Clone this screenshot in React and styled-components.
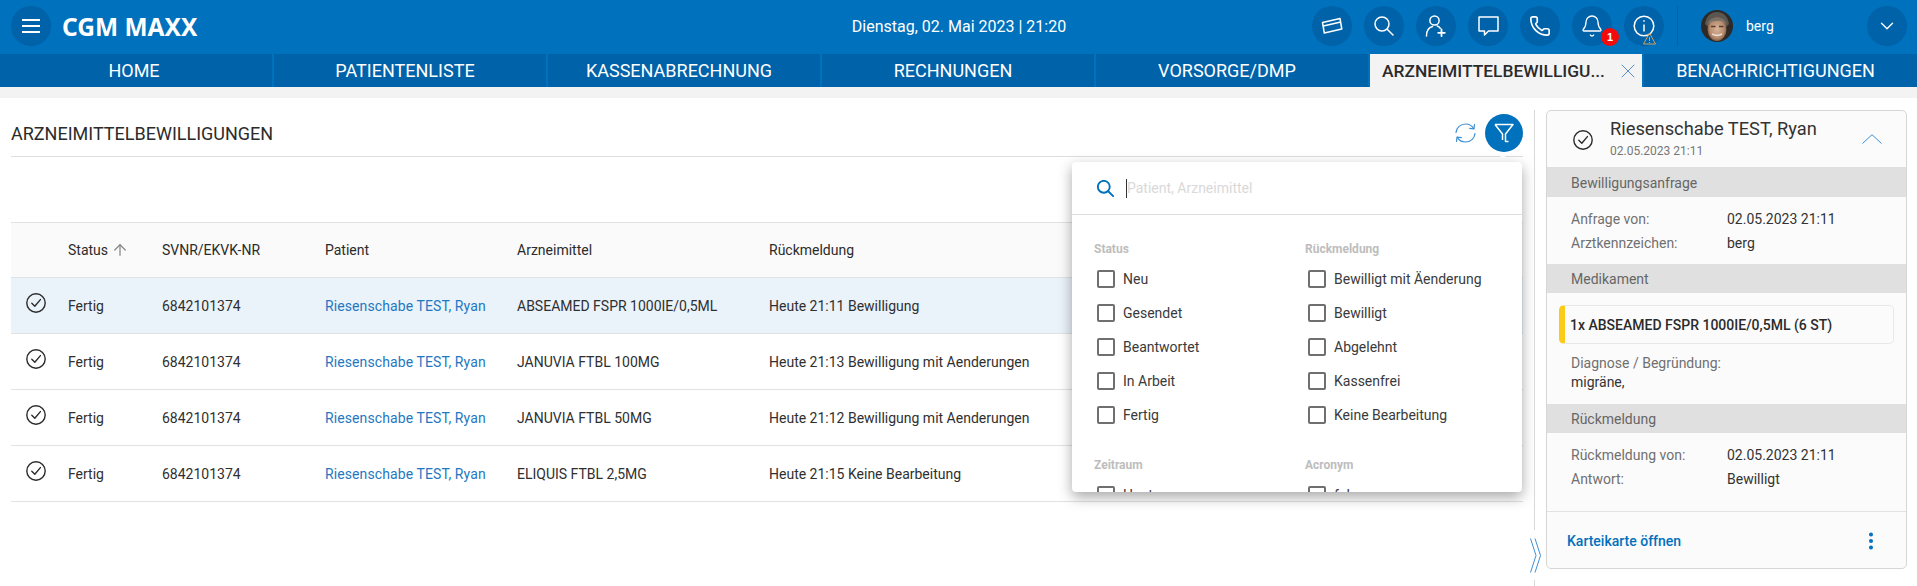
import React from 'react';
import styled, { createGlobalStyle } from 'styled-components';
import { ArrowUp, Bell, ChevronDown, MoreVertical, Phone, X } from 'lucide-react';

const GlobalStyle = createGlobalStyle`
  html, body { margin: 0; padding: 0; background: #fff; }
  body { font-family: Roboto, "Liberation Sans", sans-serif; font-size: 14px; color: #333; }
  * { box-sizing: border-box; }
`;

const Page = styled.div`
  width: 1917px;
  height: 586px;
  overflow: hidden;
  display: flex;
  flex-direction: column;
`;

const TopBar = styled.header`
  height: 54px;
  flex: none;
  background: #0071bc;
  display: grid;
  grid-template-columns: 1fr auto 1fr;
  align-items: center;
  padding: 0 10px 2px 11px;
  color: #fff;
`;

const BarLeft = styled.div`
  display: flex;
  align-items: center;
  gap: 11px;
`;

const BarRight = styled.div`
  display: flex;
  align-items: center;
  justify-content: flex-end;
`;

const RoundButton = styled.button`
  position: relative;
  width: 40px;
  height: 40px;
  flex: none;
  border: none;
  border-radius: 50%;
  padding: 0;
  background: #0062a9;
  color: #fff;
  display: flex;
  align-items: center;
  justify-content: center;
  margin-left: ${p => p.$gap || 0}px;
`;

const Logo = styled.div`
  font-family: "Noto Sans", sans-serif;
  font-weight: 700;
  font-size: 24.5px;
  white-space: nowrap;
`;

const Clock = styled.div`
  font-size: 16px;
  font-weight: 400;
`;

const Badge = styled.span`
  position: absolute;
  left: 29px;
  top: 22px;
  width: 18px;
  height: 18px;
  border-radius: 50%;
  background: #f50a0a;
  color: #fff;
  font-size: 11px;
  font-weight: 700;
  display: flex;
  align-items: center;
  justify-content: center;
`;

const WarnIcon = styled.svg`
  position: absolute;
  left: 19px;
  top: 26px;
`;

const BarDivider = styled.div`
  width: 1px;
  height: 40px;
  background: #0062a9;
  margin: 0 23px 0 13px;
`;

const UserName = styled.span`
  font-size: 14px;
  font-weight: 400;
  margin-left: 13px;
  margin-right: auto;
`;

const UserBox = styled.div`
  width: 206px;
  display: flex;
  align-items: center;
`;

const TabBar = styled.nav`
  height: 33px;
  flex: none;
  display: flex;
  gap: 2px;
  background: #0071bc;
`;

const Tab = styled.div`
  flex: none;
  width: 272px;
  display: flex;
  align-items: center;
  justify-content: center;
  padding-right: 10px;
  background: #0062a9;
  color: #fff;
  font-size: 18px;
  white-space: nowrap;
  &:first-child {
    padding-right: 4px;
  }
  &:last-child {
    flex: 1;
    width: auto;
  }
`;

const ActiveTab = styled(Tab)`
  justify-content: space-between;
  padding: 0 2px 0 12px;
  background: #f3f3f3;
  color: #2b2b2b;
  font-size: 17.4px;
  font-weight: 500;
`;

const TabClose = styled(X)`
  color: #5b8ec9;
  flex: none;
`;

const Strip = styled.div`
  height: 11px;
  flex: none;
  background: #f3f3f3;
`;

const Body = styled.div`
  flex: 1;
  min-height: 0;
  display: flex;
  padding-top: 12px;
`;

const Main = styled.main`
  position: relative;
  width: 1535px;
  flex: none;
  margin-top: -12px;
  padding: 16px 12px 0 11px;
  &::after {
    content: '';
    position: absolute;
    right: 0;
    top: 12px;
    bottom: 0;
    width: 1px;
    background: #d9d9d9;
  }
`;

const TitleRow = styled.div`
  display: flex;
  align-items: center;
  justify-content: space-between;
  padding-bottom: 4px;
  border-bottom: 1px solid #dedede;
`;

const Title = styled.h1`
  margin: 0;
  font-size: 18px;
  font-weight: 400;
  color: #2b2b2b;
`;

const TitleActions = styled.div`
  display: flex;
  align-items: center;
  gap: 9px;
  color: #3f8fd2;
`;

const FilterButton = styled.button`
  width: 38px;
  height: 38px;
  border: none;
  border-radius: 50%;
  padding: 0;
  background: #0071bc;
  display: flex;
  align-items: center;
  justify-content: center;
`;

const Table = styled.div`
  margin-top: 65px;
  border-top: 1px solid #e2e2e2;
`;

const Row = styled.div`
  display: grid;
  grid-template-columns: 57px 94px 163px 192px 252px 1fr;
  align-items: center;
  height: ${p => (p.$head ? 55 : 56)}px;
  border-bottom: 1px solid #e2e2e2;
  background: ${p => (p.$head ? '#fafafa' : p.$selected ? '#eaf2fa' : '#fff')};
  font-size: 14px;
  color: #2f2f2f;
`;

const HeadCell = styled.div`
  display: flex;
  align-items: center;
  gap: 3px;
  color: #2b2b2b;
`;

const SortIcon = styled(ArrowUp)`
  color: #888;
`;

const IconCell = styled.div`
  display: flex;
  justify-content: center;
  width: 49px;
  margin-bottom: 6px;
  color: #2b2b2b;
`;

const PatientLink = styled.a`
  color: #1f78c1;
  letter-spacing: 0.1px;
`;

const Popup = styled.div`
  position: absolute;
  left: 1072px;
  top: 64px;
  width: 450px;
  height: 330px;
  background: #fff;
  border-radius: 4px;
  box-shadow: 0 5px 14px rgba(0, 0, 0, 0.35);
  overflow: hidden;
`;

const PopupArrow = styled.div`
  position: absolute;
  left: 1495px;
  top: 56px;
  width: 0;
  height: 0;
  border-left: 8px solid transparent;
  border-right: 8px solid transparent;
  border-bottom: 8px solid #fff;
`;

const SearchRow = styled.div`
  height: 53px;
  display: flex;
  align-items: center;
  padding: 0 0 0 25px;
  border-bottom: 1px solid #dedede;
  color: #0071bc;
`;

const Caret = styled.span`
  width: 1px;
  height: 19px;
  background: #333;
  margin-left: 12px;
`;

const Placeholder = styled.span`
  font-size: 14px;
  color: #d9d9d9;
`;

const FilterGrid = styled.div`
  display: grid;
  grid-template-columns: 211px 1fr;
  row-gap: 26px;
  padding: 27px 0 0 22px;
`;

const GroupTitle = styled.div`
  font-size: 12px;
  font-weight: 700;
  color: #bdbdbd;
  line-height: 14px;
  margin-bottom: 6px;
`;

const CheckRow = styled.label`
  display: flex;
  align-items: center;
  height: 34px;
  padding-left: 3px;
  font-size: 14px;
  color: #3a3a3a;
  gap: 8px;
`;

const CheckBox = styled.span`
  width: 18px;
  height: 18px;
  flex: none;
  border: 2px solid #6f6f6f;
  border-radius: 2px;
`;

const SplitHandle = styled.div`
  position: absolute;
  right: -6px;
  top: 432px;
  width: 12px;
  height: 50px;
  background: #fff;
  display: flex;
  align-items: center;
  justify-content: center;
  z-index: 1;
`;

const Side = styled.aside`
  flex: 1;
  padding: 0 10px 0 11px;
`;

const Card = styled.section`
  height: 459px;
  background: #fbfbfb;
  border: 1px solid #d6d6d6;
  border-radius: 5px;
  display: flex;
  flex-direction: column;
`;

const CardHead = styled.div`
  height: 56px;
  flex: none;
  display: grid;
  grid-template-columns: 63px 1fr 44px;
  align-items: center;
`;

const CardIcon = styled.div`
  display: flex;
  justify-content: flex-end;
  padding-right: 17px;
  padding-top: 1px;
  color: #2b2b2b;
`;

const CardName = styled.div`
  font-size: 18.3px;
  line-height: 20px;
  margin-bottom: 3px;
  color: #333;
`;

const CardDate = styled.div`
  font-size: 12px;
  line-height: 18px;
  color: #777;
`;

const SectionBar = styled.div`
  height: ${p => (p.$first ? 30 : 29)}px;
  flex: none;
  background: #e0e0e0;
  padding: ${p => (p.$first ? 2 : 1)}px 0 0 24px;
  display: flex;
  align-items: center;
  color: #666;
`;

const InfoBlock = styled.div`
  padding: 10px 0 9px 24px;
`;

const InfoRow = styled.div`
  display: grid;
  grid-template-columns: 156px 1fr;
  line-height: 24px;
`;

const Label = styled.span`
  color: #707070;
`;

const Value = styled.span`
  color: #333;
`;

const MedBox = styled.div`
  height: 39px;
  flex: none;
  margin: 12px 12px 0 12px;
  border: 1px solid #e8e8e8;
  border-left: 6px solid #fbcb17;
  border-radius: 5px;
  padding-left: 5px;
  display: flex;
  align-items: center;
  font-weight: 500;
  color: #2b2b2b;
  font-size: 14px;
`;

const DiagnoseBlock = styled.div`
  padding: 10px 0 12px 24px;
  line-height: 19px;
`;

const CardFooter = styled.div`
  margin-top: auto;
  height: 57px;
  flex: none;
  border-top: 1px solid #e2e2e2;
  display: flex;
  align-items: center;
  justify-content: space-between;
  padding: 1px 24px 0 20px;
  color: #0071bc;
  font-weight: 500;
`;

const rows = [
  { drug: 'ABSEAMED FSPR 1000IE/0,5ML', answer: 'Heute 21:11 Bewilligung', selected: true },
  { drug: 'JANUVIA FTBL 100MG', answer: 'Heute 21:13 Bewilligung mit Aenderungen' },
  { drug: 'JANUVIA FTBL 50MG', answer: 'Heute 21:12 Bewilligung mit Aenderungen' },
  { drug: 'ELIQUIS FTBL 2,5MG', answer: 'Heute 21:15 Keine Bearbeitung' },
];

const tabs = ['HOME', 'PATIENTENLISTE', 'KASSENABRECHNUNG', 'RECHNUNGEN', 'VORSORGE/DMP'];

const filterGroups = [
  { title: 'Status', items: ['Neu', 'Gesendet', 'Beantwortet', 'In Arbeit', 'Fertig'] },
  { title: 'Rückmeldung', items: ['Bewilligt mit Äenderung', 'Bewilligt', 'Abgelehnt', 'Kassenfrei', 'Keine Bearbeitung'] },
  { title: 'Zeitraum', items: ['Heute'] },
  { title: 'Acronym', items: ['fal'] },
];

const CheckCircle = () => (
  <svg width="20" height="20" viewBox="0 0 20 20" fill="none" stroke="currentColor" strokeWidth="1.4">
    <circle cx="10" cy="10" r="9.2" />
    <path d="M5.8 10.200l3 3 5.600-6.600" strokeLinecap="round" strokeLinejoin="round" />
  </svg>
);

const MenuIcon = () => (
  <svg width="18" height="14" viewBox="0 0 18 14" stroke="#fff" strokeWidth="2">
    <path d="M0 1h18M0 7h18M0 13h18" />
  </svg>
);

const CardIconSvg = () => (
  <svg width="22" height="20" viewBox="0 0 22 20" fill="none" stroke="#fff" strokeWidth="1.5" strokeLinejoin="round">
    <path d="M1.500 6.500L19 2.500l1.800 10.500L3.300 17z" />
    <path d="M2.300 10l17.500-4" />
  </svg>
);

const SearchGlass = ({ size = 20, width = 1.5, color = '#fff' }) => (
  <svg width={size} height={size} viewBox="0 0 20 20" fill="none" stroke={color} strokeWidth={width} strokeLinecap="round">
    <circle cx="8" cy="8" r="7" />
    <path d="M13.200 13.200L19 19" />
  </svg>
);

const AddUser = () => (
  <svg width="22" height="24" viewBox="0 0 22 24" fill="none" stroke="#fff" strokeWidth="1.5" strokeLinecap="round">
    <circle cx="9.500" cy="6.500" r="4.600" />
    <path d="M1.500 22c0-5 2.600-8.500 6-9.400M12.300 12c1.200.4 2.300 1.200 3 2.300" />
    <path d="M16.500 15.500v6.500M13.200 18.800h6.600" strokeWidth="1.800" />
  </svg>
);

const ChatIcon = () => (
  <svg width="21" height="20" viewBox="0 0 21 20" fill="none" stroke="#fff" strokeWidth="1.5" strokeLinejoin="round">
    <path d="M1 1h19v14H10.500L6.500 19v-4H1z" />
  </svg>
);

const InfoIcon = () => (
  <svg width="22" height="22" viewBox="0 0 22 22" fill="none" stroke="#fff" strokeWidth="1.5">
    <circle cx="11" cy="11" r="9.800" />
    <path d="M11 9.500v7M11 5.200v1.600" />
  </svg>
);

const Avatar = () => (
  <svg width="32" height="32" viewBox="0 0 32 32">
    <defs>
      <clipPath id="avatarClip"><circle cx="16" cy="16" r="16" /></clipPath>
      <radialGradient id="faceTone" cx="50%" cy="50%" r="55%">
        <stop offset="0%" stopColor="#d8b49a" />
        <stop offset="70%" stopColor="#b58a6d" />
        <stop offset="100%" stopColor="#6d4c39" />
      </radialGradient>
    </defs>
    <g clipPath="url(#avatarClip)">
      <rect width="32" height="32" fill="#2e2a28" />
      <path d="M4 14C5 6 10 2 16 2s11 4 12 12l-3 3H7z" fill="#5b564f" />
      <ellipse cx="16" cy="19" rx="9.500" ry="12" fill="url(#faceTone)" />
      <path d="M6 14c2-5 6-7 10-6 4-1 8 1 10 6-3-3-7-4-11-3-3 0-6 1-9 3z" fill="#7a7268" />
      <path d="M10 16.500h4.500M18 16.500h4.500" stroke="#5a3d2c" strokeWidth="1.300" />
      <path d="M11 24c3 1.600 7 1.600 10 0" stroke="#eddccf" strokeWidth="1.600" fill="none" />
    </g>
  </svg>
);

const RefreshIcon = () => (
  <svg width="21" height="20" viewBox="0 0 21 20" fill="none" stroke="currentColor" strokeWidth="1.2" strokeLinecap="round" strokeLinejoin="round">
    <path d="M1 9.500C1.500 4.500 5.500 1 10.500 1c3.500 0 6.500 1.700 8.300 4.600" />
    <path d="M19.500 1.500l-.5 4.300-4.300-.4" />
    <path d="M20 10.500c-.5 5-4.500 8.500-9.500 8.500-3.500 0-6.500-1.700-8.300-4.600" />
    <path d="M1.500 18.500l.5-4.300 4.300.4" />
  </svg>
);

const FunnelIcon = () => (
  <svg width="20" height="20" viewBox="0 0 20 20" fill="none" stroke="#fff" strokeWidth="1.500" strokeLinejoin="round">
    <path d="M1 1.500h18L11.500 11v7.500h3M8.500 17V11L1 1.500" />
  </svg>
);

const CollapseIcon = () => (
  <svg width="20" height="10" viewBox="0 0 20 10" fill="none" stroke="#3f8fd2" strokeWidth="1">
    <path d="M.5 9.500L10 .7l9.500 8.800" />
  </svg>
);

const SplitChevrons = () => (
  <svg width="11" height="35" viewBox="0 0 11 35" fill="none" stroke="#3f8fd2" strokeWidth="1">
    <path d="M.5 .5L6 17.500.5 34.500" />
    <path d="M5 .5L10.500 17.500 5 34.500" />
  </svg>
);

export default function App() {
  return (
    <Page>
      <GlobalStyle />
      <TopBar>
        <BarLeft>
          <RoundButton><MenuIcon /></RoundButton>
          <Logo>CGM MAXX</Logo>
        </BarLeft>
        <Clock>Dienstag, 02. Mai 2023 | 21:20</Clock>
        <BarRight>
          <RoundButton><CardIconSvg /></RoundButton>
          <RoundButton $gap={12}><SearchGlass /></RoundButton>
          <RoundButton $gap={12}><AddUser /></RoundButton>
          <RoundButton $gap={12}><ChatIcon /></RoundButton>
          <RoundButton $gap={12}><Phone size={22} strokeWidth={1.8} /></RoundButton>
          <RoundButton $gap={12}>
            <Bell size={24} strokeWidth={1.3} />
            <Badge>1</Badge>
          </RoundButton>
          <RoundButton $gap={12}>
            <InfoIcon />
            <WarnIcon width="13" height="13" viewBox="0 0 13 13" fill="none" stroke="#c9a465" strokeWidth="1">
              <path d="M6.500 1L12.500 12H.5z" />
              <path d="M6.500 5v4M6.500 10v1" />
            </WarnIcon>
          </RoundButton>
          <BarDivider />
          <UserBox>
            <Avatar />
            <UserName>berg</UserName>
            <RoundButton><ChevronDown size={22} strokeWidth={1.5} /></RoundButton>
          </UserBox>
        </BarRight>
      </TopBar>

      <TabBar>
        {tabs.map(t => <Tab key={t}>{t}</Tab>)}
        <ActiveTab>
          ARZNEIMITTELBEWILLIGU...
          <TabClose size={24} strokeWidth={1} />
        </ActiveTab>
        <Tab>BENACHRICHTIGUNGEN</Tab>
      </TabBar>
      <Strip />

      <Body>
        <Main>
          <TitleRow>
            <Title>ARZNEIMITTELBEWILLIGUNGEN</Title>
            <TitleActions>
              <RefreshIcon />
              <FilterButton><FunnelIcon /></FilterButton>
            </TitleActions>
          </TitleRow>

          <Table>
            <Row $head>
              <span />
              <HeadCell>Status <SortIcon size={18} strokeWidth={1.700} /></HeadCell>
              <HeadCell>SVNR/EKVK-NR</HeadCell>
              <HeadCell>Patient</HeadCell>
              <HeadCell>Arzneimittel</HeadCell>
              <HeadCell>Rückmeldung</HeadCell>
            </Row>
            {rows.map(r => (
              <Row key={r.drug} $selected={r.selected}>
                <IconCell><CheckCircle /></IconCell>
                <span>Fertig</span>
                <span>6842101374</span>
                <PatientLink>Riesenschabe TEST, Ryan</PatientLink>
                <span>{r.drug}</span>
                <span>{r.answer}</span>
              </Row>
            ))}
          </Table>

          <PopupArrow />
          <Popup>
            <SearchRow>
              <SearchGlass size={17} width={2.200} color="#0071bc" />
              <Caret />
              <Placeholder>Patient, Arzneimittel</Placeholder>
            </SearchRow>
            <FilterGrid>
              {filterGroups.map(g => (
                <div key={g.title}>
                  <GroupTitle>{g.title}</GroupTitle>
                  {g.items.map(item => (
                    <CheckRow key={item}><CheckBox />{item}</CheckRow>
                  ))}
                </div>
              ))}
            </FilterGrid>
          </Popup>

          <SplitHandle><SplitChevrons /></SplitHandle>
        </Main>

        <Side>
          <Card>
            <CardHead>
              <CardIcon><CheckCircle /></CardIcon>
              <div>
                <CardName>Riesenschabe TEST, Ryan</CardName>
                <CardDate>02.05.2023 21:11</CardDate>
              </div>
              <CollapseIcon />
            </CardHead>

            <SectionBar $first>Bewilligungsanfrage</SectionBar>
            <InfoBlock>
              <InfoRow><Label>Anfrage von:</Label><Value>02.05.2023 21:11</Value></InfoRow>
              <InfoRow><Label>Arztkennzeichen:</Label><Value>berg</Value></InfoRow>
            </InfoBlock>

            <SectionBar>Medikament</SectionBar>
            <MedBox>1x ABSEAMED FSPR 1000IE/0,5ML (6 ST)</MedBox>
            <DiagnoseBlock>
              <Label>Diagnose / Begründung:</Label>
              <br />
              <Value>migräne,</Value>
            </DiagnoseBlock>

            <SectionBar>Rückmeldung</SectionBar>
            <InfoBlock>
              <InfoRow><Label>Rückmeldung von:</Label><Value>02.05.2023 21:11</Value></InfoRow>
              <InfoRow><Label>Antwort:</Label><Value>Bewilligt</Value></InfoRow>
            </InfoBlock>

            <CardFooter>
              Karteikarte öffnen
              <MoreVertical size={22} strokeWidth={2.400} />
            </CardFooter>
          </Card>
        </Side>
      </Body>
    </Page>
  );
}
